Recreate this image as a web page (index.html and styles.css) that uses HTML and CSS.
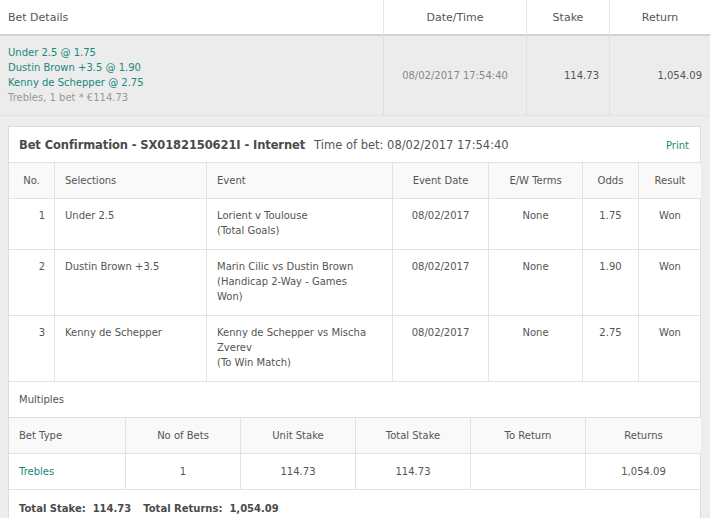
FILE: index.html
```html
<!DOCTYPE html>
<html>
<head>
<meta charset="utf-8">
<link rel="stylesheet" href="styles.css">
</head>
<body>
<div class="summary">
  <div class="sum-head sum-first">Bet Details</div>
  <div class="sum-head">Date/Time</div>
  <div class="sum-head">Stake</div>
  <div class="sum-head">Return</div>
  <div class="sum-cell sum-first sum-sel">
    <div class="green">Under 2.5 @ 1.75</div>
    <div class="green">Dustin Brown +3.5 @ 1.90</div>
    <div class="green">Kenny de Schepper @ 2.75</div>
    <div class="muted">Trebles, 1 bet * €114.73</div>
  </div>
  <div class="sum-cell sum-date">08/02/2017 17:54:40</div>
  <div class="sum-cell sum-num">114.73</div>
  <div class="sum-cell sum-num sum-last">1,054.09</div>
</div>
<div class="detail">
  <div class="panel">
    <div class="panel-head">
      <div class="panel-title"><b>Bet Confirmation - SX0182150621I - Internet</b><span class="tob">Time of bet: 08/02/2017 17:54:40</span></div>
      <div class="green print">Print</div>
    </div>
    <div class="grid sel-grid">
      <div class="th c first">No.</div>
      <div class="th">Selections</div>
      <div class="th">Event</div>
      <div class="th c">Event Date</div>
      <div class="th c">E/W Terms</div>
      <div class="th c">Odds</div>
      <div class="th c">Result</div>

      <div class="td r first">1</div>
      <div class="td">Under 2.5</div>
      <div class="td">Lorient v Toulouse<br>(Total Goals)</div>
      <div class="td c">08/02/2017</div>
      <div class="td c">None</div>
      <div class="td c">1.75</div>
      <div class="td c">Won</div>

      <div class="td r first">2</div>
      <div class="td">Dustin Brown +3.5</div>
      <div class="td">Marin Cilic vs Dustin Brown<br>(Handicap 2-Way - Games<br>Won)</div>
      <div class="td c">08/02/2017</div>
      <div class="td c">None</div>
      <div class="td c">1.90</div>
      <div class="td c">Won</div>

      <div class="td r first">3</div>
      <div class="td">Kenny de Schepper</div>
      <div class="td">Kenny de Schepper vs Mischa<br>Zverev<br>(To Win Match)</div>
      <div class="td c">08/02/2017</div>
      <div class="td c">None</div>
      <div class="td c">2.75</div>
      <div class="td c">Won</div>
    </div>
    <div class="multiples">Multiples</div>
    <div class="grid mult-grid">
      <div class="th first">Bet Type</div>
      <div class="th c">No of Bets</div>
      <div class="th c">Unit Stake</div>
      <div class="th c">Total Stake</div>
      <div class="th c">To Return</div>
      <div class="th c">Returns</div>

      <div class="td mid first green">Trebles</div>
      <div class="td mid c">1</div>
      <div class="td mid c">114.73</div>
      <div class="td mid c">114.73</div>
      <div class="td mid c"></div>
      <div class="td mid c">1,054.09</div>
    </div>
    <div class="totals"><b>Total Stake:&nbsp; 114.73</b><b class="tr">Total Returns:&nbsp; 1,054.09</b></div>
  </div>
</div>
</body>
</html>
```

FILE: styles.css
```css
html, body {
  margin: 0;
  padding: 0;
}
body {
  width: 710px;
  height: 518px;
  overflow: hidden;
  background: #ededed;
  font-family: "DejaVu Sans", Verdana, sans-serif;
  font-size: 10px;
  line-height: 15px;
  color: #555;
}
.green { color: #158a79; }
.muted { color: #999; }

.summary {
  display: grid;
  grid-template-columns: 383px 143px 83px 101px;
}
.sum-head {
  background: #fff;
  height: 36px;
  box-sizing: border-box;
  border-left: 1px solid #e6e6e6;
  border-bottom: 2px solid #d2d2d2;
  font-size: 11px;
  color: #555;
  display: flex;
  align-items: center;
  justify-content: center;
  padding-top: 1px;
}
.sum-head.sum-first {
  border-left: none;
  justify-content: flex-start;
  padding-left: 8px;
}
.sum-cell {
  background: #ececec;
  height: 80px;
  box-sizing: border-box;
  border-left: 1px solid #e0e0e0;
  border-bottom: 1px solid #e3e3e3;
  display: flex;
  align-items: center;
}
.sum-cell.sum-first {
  border-left: none;
  flex-direction: column;
  align-items: flex-start;
  justify-content: center;
  padding-left: 8px;
  padding-bottom: 1px;
}
.sum-date {
  justify-content: center;
  color: #888;
  padding-bottom: 1px;
}
.sum-num {
  justify-content: flex-end;
  padding-right: 10px;
  padding-bottom: 1px;
}
.sum-num.sum-last { padding-right: 8px; }

.detail {
  padding: 10px 9px 0 8px;
}
.panel {
  background: #fff;
  border: 1px solid #dcdcdc;
  height: 420px;
}
.panel-head {
  height: 36px;
  box-sizing: border-box;
  border-bottom: 1px solid #e0e0e0;
  display: flex;
  align-items: center;
  justify-content: space-between;
  padding: 2px 11px 0 10px;
  font-size: 11.5px;
  color: #444;
}
.panel-title b { color: #4a4a4a; letter-spacing: -0.1px; }
.tob { margin-left: 9px; color: #555; }
.print { font-size: 10px; }

.grid {
  display: grid;
}
.sel-grid {
  grid-template-columns: 45px 152px 186px 96px 94px 56px 63px;
}
.mult-grid {
  grid-template-columns: 116px 115px 115px 115px 115px 116px;
  border-top: 1px solid #e0e0e0;
}
.th, .td {
  box-sizing: border-box;
  border-left: 1px solid #e2e2e2;
  border-bottom: 1px solid #e2e2e2;
  padding: 0 10px;
}
.th.first, .td.first { border-left: none; }
.th {
  background: #f9f9f9;
  height: 36px;
  display: flex;
  align-items: center;
}
.td {
  padding-top: 9px;
  padding-bottom: 10px;
}
.sel-grid .td:nth-child(n+8):nth-child(-n+14) { height: 51px; }
.sel-grid .td:nth-child(n+15) { height: 66px; }
.td.mid {
  height: 36px;
  padding-top: 0;
  padding-bottom: 0;
  display: flex;
  align-items: center;
}
.c { text-align: center; justify-content: center; }
.r { text-align: right; padding-right: 9px; }
.multiples {
  height: 35px;
  display: flex;
  align-items: center;
  padding-left: 10px;
}
.totals {
  height: 36px;
  display: flex;
  align-items: center;
  padding-left: 10px;
  font-size: 10px;
  color: #4a4a4a;
}
.totals .tr { margin-left: 12px; }
```
